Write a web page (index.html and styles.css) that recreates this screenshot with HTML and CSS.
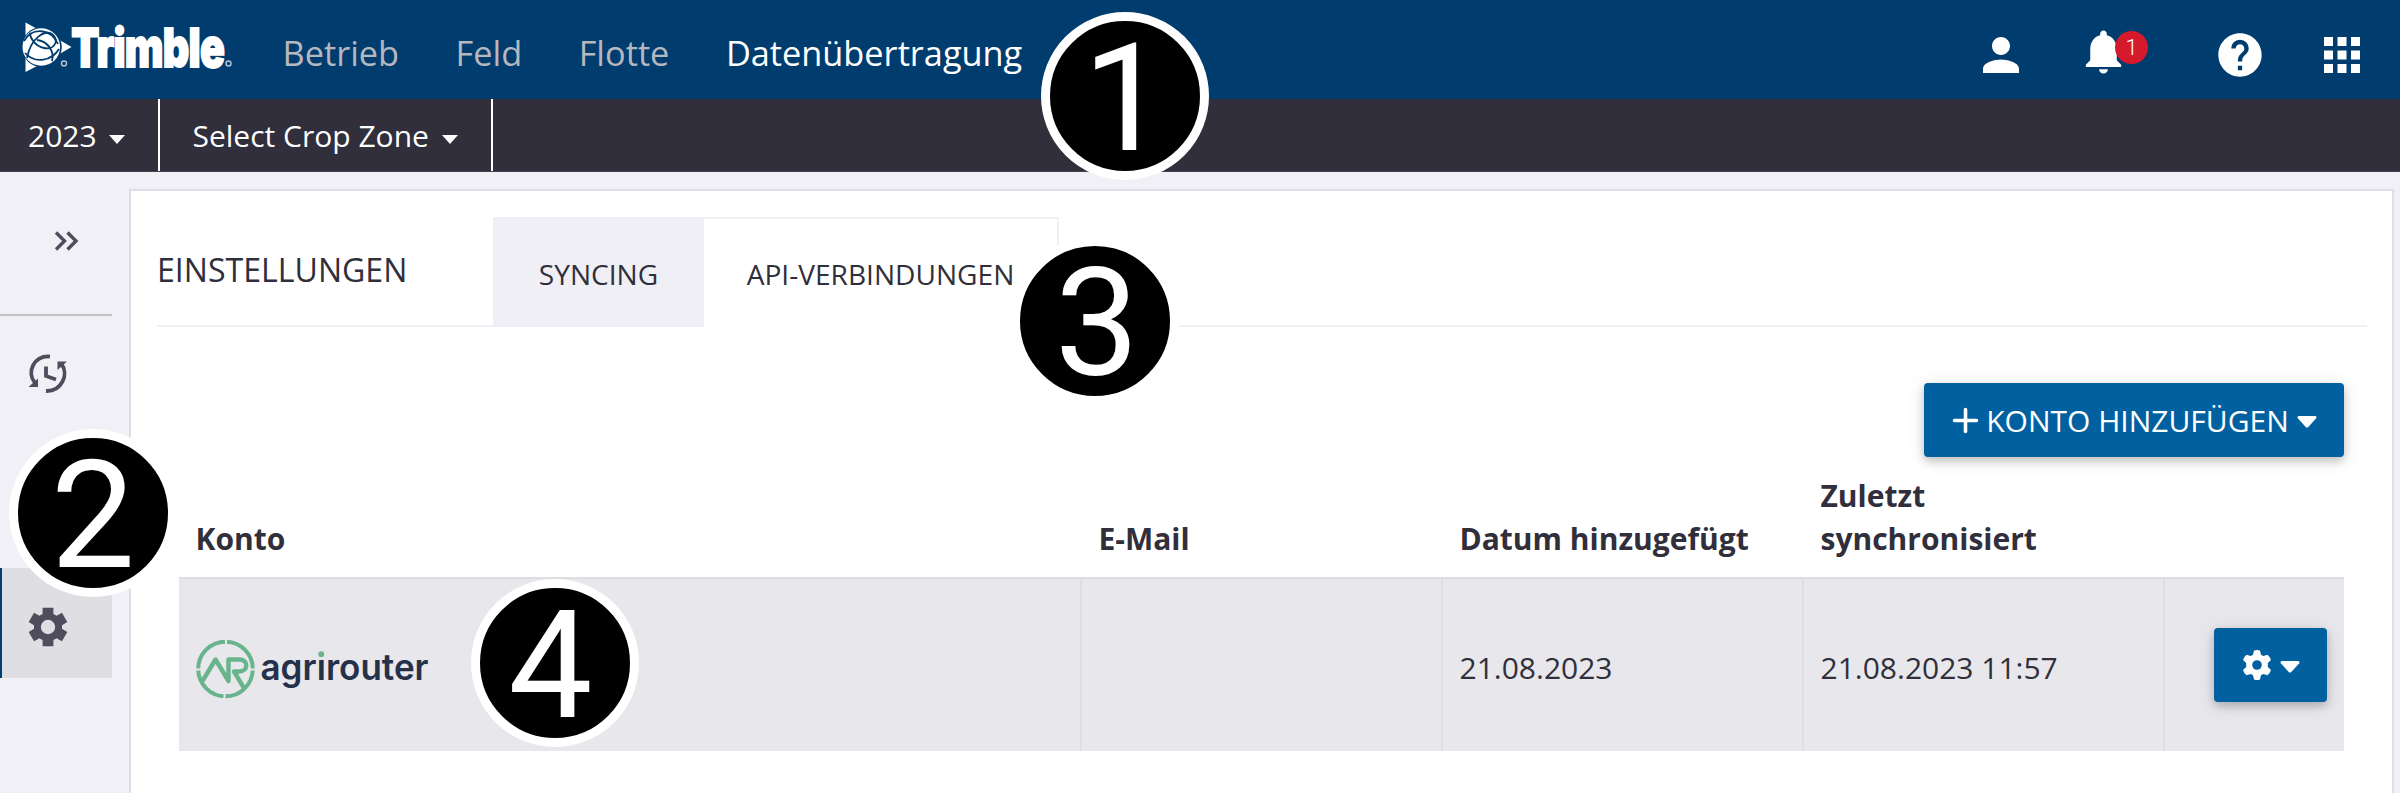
FILE: index.html
```html
<!DOCTYPE html>
<html lang="de">
<head>
<meta charset="utf-8">
<title>Trimble – Datenübertragung</title>
<link rel="stylesheet" href="styles.css">
</head>
<body>
<header class="topbar">
  <svg class="brand" viewBox="0 0 220 60" width="220" height="60" role="img" aria-label="Trimble">
    <path class="white" d="M10.500 7.500L26 16L42 23.500L56.500 32L42 40.500L26 49L10.500 57z"/>
    <circle class="globe" cx="26.800" cy="32" r="20"/>
    <circle class="white" cx="26.300" cy="32" r="18.800"/>
    <g class="orbit">
      <path d="M9 26C17 12 36 13 43 29"/>
      <path d="M12 43C16 22 30 15 37 19C45 26 39 35 29 33C20 31 15 23 15 18"/>
      <path d="M10 38C20 49 37 46 44 34"/>
      <path d="M22 25C32 26 40 36 37 46"/>
    </g>
    <circle class="reg" cx="49" cy="48.500" r="2.500"/>
    <text class="brand-name" x="56" y="51.500" textLength="144" lengthAdjust="spacingAndGlyphs">Trimble</text>
    <circle class="reg" cx="213.500" cy="48.500" r="2.500"/>
  </svg>
  <nav class="nav">
    <a>Betrieb</a><a>Feld</a><a>Flotte</a><a class="active">Datenübertragung</a>
  </nav>
  <div class="actions">
    <svg class="person" viewBox="0 0 24 24" width="54" height="54"><path d="M12 12c2.210 0 4-1.790 4-4s-1.790-4-4-4-4 1.790-4 4 1.790 4 4 4zm0 2c-2.670 0-8 1.340-8 4v2h16v-2c0-2.660-5.330-4-8-4z"/></svg>
    <span class="bell">
      <svg viewBox="0 0 24 24" width="53" height="53"><path d="M12 22c1.100 0 2-.9 2-2h-4c0 1.100.9 2 2 2zm6-6v-5c0-3.070-1.640-5.640-4.500-6.320V4c0-.83-.67-1.500-1.500-1.500s-1.500.67-1.500 1.500v.68C7.630 5.360 6 7.920 6 11v5l-2 2v1h16v-1l-2-2z"/></svg>
      <span class="count">1</span>
    </span>
    <svg class="help" viewBox="0 0 24 24" width="52" height="52"><path d="M12 2C6.480 2 2 6.480 2 12s4.480 10 10 10 10-4.480 10-10S17.520 2 12 2zm1 17h-2v-2h2v2zm2.070-7.750l-.9.920C13.450 12.900 13 13.500 13 15h-2v-.5c0-1.100.45-2.100 1.170-2.830l1.240-1.260c.37-.36.590-.86.590-1.410 0-1.100-.9-2-2-2s-2 .9-2 2H8c0-2.210 1.790-4 4-4s4 1.790 4 4c0 .88-.36 1.680-.93 2.250z"/></svg>
    <svg class="apps" viewBox="0 0 24 24" width="54" height="54"><path d="M4 8h4V4H4v4zm6 12h4v-4h-4v4zm-6 0h4v-4H4v4zm0-6h4v-4H4v4zm6 0h4v-4h-4v4zm6-10v4h4V4h-4zm-6 4h4V4h-4v4zm6 6h4v-4h-4v4zm0 6h4v-4h-4v4z"/></svg>
  </div>
</header>

<div class="filterbar">
  <div class="filter year"><span>2023</span><i class="arrow"></i></div>
  <div class="filter zone"><span>Select Crop Zone</span><i class="arrow"></i></div>
</div>

<div class="body">
  <aside class="sidebar">
    <div class="expand">
      <svg viewBox="0 0 24 20" width="24" height="20"><path d="M2 1.500L10.500 10L2 18.500M13.500 1.500L22 10L13.500 18.500"/></svg>
    </div>
    <div class="side-item">
      <svg class="sync" viewBox="0 0 40 40" width="40" height="40">
        <path class="line" d="M22 2.500C6 1.500-2 18 7 29M18 37C34 37.500 41 20 33.500 10"/>
        <path class="solid" d="M.5 33H10V24.500zM29.500 7.500H39L29.500 16z"/>
        <path class="line" d="M18 12.500V22L28 25.500"/>
      </svg>
    </div>
    <div class="side-item"></div>
    <div class="side-item selected">
      <svg class="gear" viewBox="-20 -20 40 40" width="40" height="40">
        <path fill-rule="evenodd" d="M-5.400-19.200H5.400V-13A14 14 0 0 1 8.500-11.200L14-14.200L19.300-5L14-1.800V1.800L19.300 5L14 14.200L8.500 11.200A14 14 0 0 1 5.400 13V19.200H-5.400V13A14 14 0 0 1-8.500 11.200L-14 14.200L-19.300 5L-14 1.800V-1.800L-19.300-5L-14-14.200L-8.500-11.200A14 14 0 0 1-5.400-13zM7.200 0A7.200 7.200 0 1 0-7.200 0A7.200 7.200 0 1 0 7.200 0z"/>
      </svg>
    </div>
  </aside>

  <main class="card">
    <div class="tabs">
      <h1>EINSTELLUNGEN</h1>
      <div class="tab">SYNCING</div>
      <div class="tab current">API-VERBINDUNGEN</div>
      <div class="tab-rest"></div>
    </div>
    <div class="toolbar">
      <button class="btn add">
        <svg viewBox="0 0 25 25" width="25" height="25"><path class="plus" d="M12.500 1.500V23.500M1.500 12.500H23.500"/></svg>
        <span>KONTO HINZUFÜGEN</span>
        <svg class="caret" viewBox="0 0 20 12" width="20" height="12"><path d="M2 0H18Q20.500 .5 19 2.500L11.300 11Q10 12.200 8.700 11L1 2.500Q-.5 .5 2 0z"/></svg>
      </button>
    </div>
    <div class="table">
      <div class="th">Konto</div><div class="th">E-Mail</div><div class="th">Datum hinzugefügt</div><div class="th">Zuletzt<br>synchronisiert</div><div class="th"></div>
      <div class="td">
        <svg class="agri" viewBox="0 0 240 60" width="240" height="60" role="img" aria-label="agrirouter">
          <circle class="ring" cx="30.500" cy="31" r="27.300"/>
          <path class="gaps" d="M31 1V7M29.500 55V61M0 31.500H6M55 31.500H61"/>
          <path class="mark" d="M7.500 43L20.500 21.500L33.500 43V21.500H44C54 21.500 53.500 33.500 44 33.500H39L49 50"/>
          <text class="agri-name" x="65.500" y="42" textLength="168" lengthAdjust="spacingAndGlyphs">agrirouter</text>
          <rect class="dot-bg" x="121" y="10" width="10" height="10.500"/>
          <circle class="dot" cx="126.300" cy="16.200" r="2.900"/>
        </svg>
      </div>
      <div class="td"></div>
      <div class="td">21.08.2023</div>
      <div class="td">21.08.2023 11:57</div>
      <div class="td last">
        <button class="btn config">
          <svg viewBox="-15 -15 30 30" width="30" height="30"><path fill-rule="evenodd" d="M-3-14.500Q0-15.600 3-14.500L4-10.300L6.300-9L10.500-10.300Q13-8.300 14-5L10.800-2V2L14 5Q13 8.300 10.500 10.300L6.300 9L4 10.300L3 14.500Q0 15.600-3 14.500L-4 10.300L-6.300 9L-10.500 10.300Q-13 8.300-14 5L-10.800 2V-2L-14-5Q-13-8.300-10.500-10.300L-6.300-9L-4-10.300zM4.800 0A4.800 4.800 0 1 0-4.800 0A4.800 4.800 0 1 0 4.800 0z"/></svg>
          <svg class="caret" viewBox="0 0 20 12" width="20" height="12"><path d="M2 0H18Q20.500 .5 19 2.500L11.300 11Q10 12.200 8.700 11L1 2.500Q-.5 .5 2 0z"/></svg>
        </button>
      </div>
    </div>
  </main>
</div>

<div class="step step-1">1</div>
<div class="step step-2">2</div>
<div class="step step-3">3</div>
<div class="step step-4">4</div>
</body>
</html>
```
FILE: styles.css
```css
* { box-sizing: border-box; }
body {
  margin: 0;
  width: 2400px;
  height: 793px;
  overflow: hidden;
  position: relative;
  display: flex;
  flex-direction: column;
  background: #f1f0f6;
  color: #302f3b;
  font-family: "Open Sans", "Noto Sans", sans-serif;
  font-size: 30px;
}
svg { display: block; flex: none; overflow: visible; }

.topbar {
  height: 99px;
  flex: none;
  display: flex;
  background: #003d6e;
  padding-left: 15px;
}
.brand { margin-top: 15px; }
.brand .white { fill: #fff; }
.globe { fill: #003d6e; }
.orbit path { fill: none; stroke: #003d6e; stroke-width: 1.8; }
.reg { fill: none; stroke: #b5c4d4; stroke-width: 1.4; }
.brand-name {
  font-family: Inter, sans-serif;
  font-weight: 900;
  font-size: 54px;
  fill: #fff;
  stroke: #fff;
  stroke-width: 1.8;
  letter-spacing: -1px;
  transform: translateX(-3px) scaleX(1.06);
}
.nav {
  display: flex;
  gap: 56.5px;
  padding-left: 47.5px;
  font-size: 34.3px;
  line-height: 105px;
  color: #b7b7be;
}
.nav .active { color: #fff; }
.actions {
  margin-left: auto;
  display: flex;
  align-items: center;
  padding: 11px 31px 0 0;
}
.actions svg { fill: #fff; }
.bell { position: relative; margin: -8px 84px 0 49px; }
.count {
  position: absolute;
  left: 38px;
  top: 6px;
  width: 33px;
  height: 33px;
  border-radius: 50%;
  background: #d51a2c;
  color: #fff;
  font: 300 22px/34px Roboto, sans-serif;
  text-align: center;
}
.help { margin-right: 49px; }

.filterbar {
  height: 73px;
  flex: none;
  display: flex;
  background: #302f3b;
  border-bottom: 1px solid #42414c;
  color: #fff;
}
.filter {
  display: flex;
  align-items: center;
  border-right: 2px solid #fff;
}
.year { width: 160px; padding-left: 28px; gap: 12px; }
.zone { width: 333px; padding-left: 32.5px; gap: 13.5px; }
.arrow {
  border: 8px solid transparent;
  border-top: 9px solid #fff;
  border-bottom: 0;
  margin-top: 8px;
}

.body { flex: 1; display: flex; }
.sidebar { width: 112px; flex: none; }
.expand {
  height: 144px;
  border-bottom: 2px solid #c3c3c6;
  padding: 59px 0 0 54px;
}
.expand path { fill: none; stroke: #4f4d5c; stroke-width: 3.4; }
.side-item {
  height: 110px;
  padding: 2px 0 0 28px;
  display: flex;
  align-items: center;
}
.side-item + .side-item { margin-top: 15px; }
.expand + .side-item { margin-top: 2px; }
.sync .line { fill: none; stroke: #4f4d5c; stroke-width: 3.8; }
.sync .solid, .gear path { fill: #4f4d5c; }
.side-item.selected {
  border-left: 2px solid #003f72;
  background: #dfdee3;
  padding: 7px 0 0 25.5px;
}

.card {
  width: 2265px;
  margin: 17px 0 0 17px;
  background: #fff;
  border: 2px solid #dfdee4;
  border-bottom: 0;
  padding: 26px 25px 0 26px;
}
.tabs { display: flex; height: 110px; }
.tabs h1 {
  margin: 0;
  width: 336px;
  border-bottom: 2px solid #f0f0f6;
  font-weight: 400;
  font-size: 32.1px;
  line-height: 106px;
}
.tab {
  width: 211px;
  padding-top: 2px;
  background: #f0eff5;
  text-align: center;
  font-size: 28.1px;
  line-height: 110px;
}
.tab.current {
  width: 355px;
  padding: 0;
  background: #fff;
  border: solid #f0eff5;
  border-width: 2px 2px 0 0;
}
.tab-rest { flex: 1; border-bottom: 2px solid #f0f0f6; }

.toolbar { padding: 56px 23px 0 0; display: flex; justify-content: flex-end; }
.btn {
  border: 0;
  border-radius: 4px;
  background: #0060a0;
  color: #fff;
  height: 74px;
  padding: 0;
  display: flex;
  align-items: center;
  justify-content: center;
  font: 400 30px "Open Sans", sans-serif;
  box-shadow: 0 4px 8px rgba(0,0,0,.2), 0 3px 20px rgba(0,0,0,.1);
}
.btn svg { fill: #fff; }
.btn .caret { margin-top: 4px; }
.btn .plus { stroke: #fff; stroke-width: 3.6; stroke-linecap: round; }
.add { width: 420px; gap: 8px; padding-left: 2px; }
.config { width: 113px; gap: 8px; }

.table {
  margin: 6px 23px 0 22px;
  display: grid;
  grid-template-columns: 903px 361px 361px 361px 1fr;
  grid-template-rows: 114px 174px;
}
.th {
  display: flex;
  align-items: flex-end;
  padding: 0 0 17px 16.5px;
  font-weight: 700;
  line-height: 43px;
}
.td {
  display: flex;
  align-items: center;
  padding: 5px 0 0 16.5px;
  background: #e8e7ec;
  border-top: 2px solid #dedde2;
  border-right: 2px solid #dfdfe3;
}
.td.last { border-right: 0; justify-content: flex-end; padding: 0 17px 0 0; }
.agri { margin: 1px 0 0 -.5px; }
.ring { fill: none; stroke: #68b48c; stroke-width: 4; }
.gaps { stroke: #e8e7ec; stroke-width: 2; }
.mark { fill: none; stroke: #68b48c; stroke-width: 4.4; stroke-linejoin: round; }
.agri-name {
  font-family: Inter, sans-serif;
  font-weight: 600;
  font-size: 36px;
  fill: #25304a;
}
.dot-bg { fill: #e8e7ec; }
.dot { fill: #68b48c; }

/* Numbered callouts laid over the interface */
.step {
  position: absolute;
  width: 168px;
  height: 168px;
  border: 9px solid #fff;
  border-radius: 50%;
  background: #000;
  color: #fff;
  font: 400 150px/156px Roboto, sans-serif;
  text-align: center;
}
.step-1 { left: 1041px; top: 12px; }
.step-2 { left: 9px; top: 429px; }
.step-3 { left: 1011px; top: 237px; padding-left: 4px; }
.step-4 { left: 471px; top: 579px; padding-right: 9px; }
```
